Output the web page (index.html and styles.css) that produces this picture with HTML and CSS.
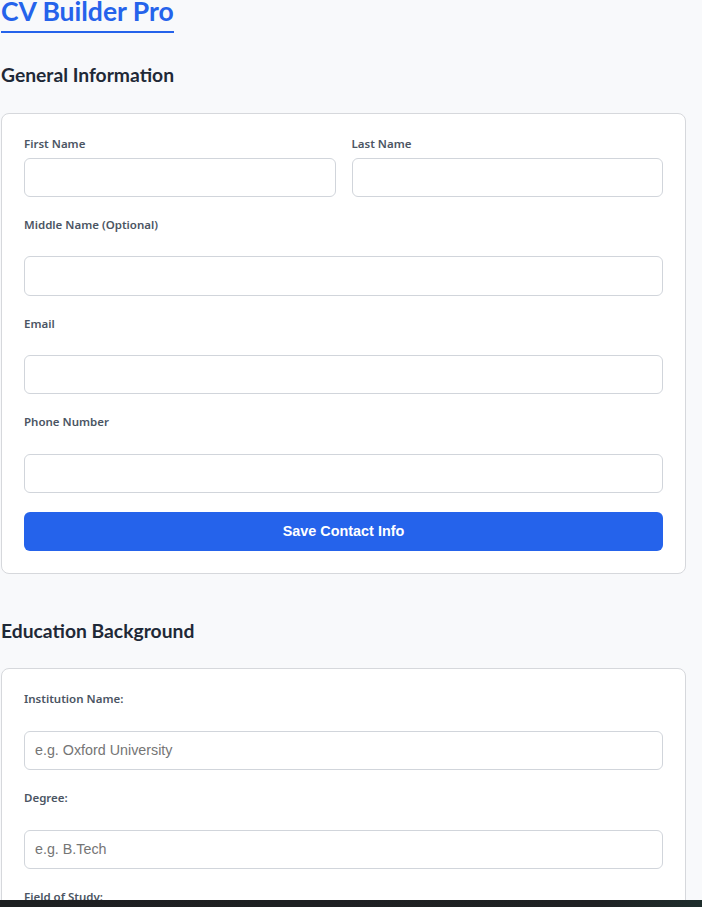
FILE: index.html
```html
<!DOCTYPE html>
<html lang="en">
<head>
<meta charset="utf-8">
<title>CV Builder Pro</title>
<link rel="stylesheet" href="styles.css">
</head>
<body>
<div class="app">
  <h1 class="brand">CV Builder Pro</h1>

  <section class="section">
    <h2 class="section-title">General Information</h2>
    <form class="card">
      <div class="name-row">
        <div class="name-field">
          <label class="label label-tight">First Name</label>
          <input class="input" type="text">
        </div>
        <div class="name-field">
          <label class="label label-tight">Last Name</label>
          <input class="input" type="text">
        </div>
      </div>
      <div class="field">
        <label class="label">Middle Name (Optional)</label>
        <input class="input" type="text">
      </div>
      <div class="field">
        <label class="label">Email</label>
        <input class="input" type="email">
      </div>
      <div class="field">
        <label class="label">Phone Number</label>
        <input class="input" type="tel">
      </div>
      <button class="btn" type="button">Save Contact Info</button>
    </form>
  </section>

  <section class="section section-edu">
    <h2 class="section-title">Education Background</h2>
    <form class="card card-edu">
      <div class="field field-first">
        <label class="label">Institution Name:</label>
        <input class="input" type="text" placeholder="e.g. Oxford University">
      </div>
      <div class="field">
        <label class="label">Degree:</label>
        <input class="input" type="text" placeholder="e.g. B.Tech">
      </div>
      <div class="field">
        <label class="label">Field of Study:</label>
        <input class="input" type="text" placeholder="e.g. Computer Science">
      </div>
      <div class="field">
        <label class="label">Start Date:</label>
        <input class="input" type="text">
      </div>
    </form>
  </section>
</div>
<div class="taskbar"></div>
</body>
</html>
```

FILE: styles.css
```css
html, body {
  margin: 0;
  padding: 0;
}

body {
  background: #f8f9fb;
  font-family: "Noto Sans", "Open Sans", Arial, sans-serif;
  color: #1f2937;
  overflow: hidden;
}

.app {
  width: 685px;
  padding-left: 1px;
}

.brand {
  display: inline-block;
  margin: 0;
  font-family: Lato, "Noto Sans", sans-serif;
  font-size: 26.5px;
  font-weight: 700;
  line-height: 22px;
  color: #2563eb;
  border-bottom: 2px solid #2563eb;
  padding-bottom: 9px;
}

.section {
  margin-top: 30px;
}

.section-edu {
  margin-top: 44.5px;
}

.section-title {
  margin: 0 0 25.8px 0;
  font-family: Lato, "Noto Sans", sans-serif;
  font-size: 19.3px;
  font-weight: 700;
  line-height: 24px;
  color: #1f2937;
}

.card {
  background: #ffffff;
  border: 1px solid #d6d8dc;
  border-radius: 8px;
  padding: 22px;
  display: flex;
  flex-direction: column;
}

.name-row {
  display: grid;
  grid-template-columns: 1fr 1fr;
  column-gap: 16px;
}

.name-field {
  display: flex;
  flex-direction: column;
}

.field {
  display: flex;
  flex-direction: column;
  margin-top: 20px;
}

.field-first {
  margin-top: 0;
}

.label {
  font-size: 11.5px;
  font-weight: 600;
  line-height: 16px;
  color: #4b5563;
  margin-bottom: 23.5px;
}

.label-tight {
  margin-bottom: 6px;
}

.input {
  box-sizing: border-box;
  height: 39.2px;
  width: 100%;
  margin: 0;
  border: 1px solid #d1d5db;
  border-radius: 6px;
  background: #ffffff;
  padding: 0 10px;
  font-family: "Liberation Sans", Arial, sans-serif;
  font-size: 14.3px;
  color: #111827;
  outline: none;
}

.input::placeholder {
  color: #757575;
}

.btn {
  margin-top: 18.5px;
  height: 39.5px;
  border: none;
  border-radius: 6px;
  background: #2563eb;
  color: #ffffff;
  font-family: "Liberation Sans", Arial, sans-serif;
  font-size: 14.4px;
  font-weight: 700;
  cursor: pointer;
}

.taskbar {
  position: fixed;
  left: 0;
  right: 0;
  bottom: 0;
  height: 7px;
  background: linear-gradient(90deg, #1d1f21 0%, #1f2123 85%, #1e2d2c 100%);
}
```
